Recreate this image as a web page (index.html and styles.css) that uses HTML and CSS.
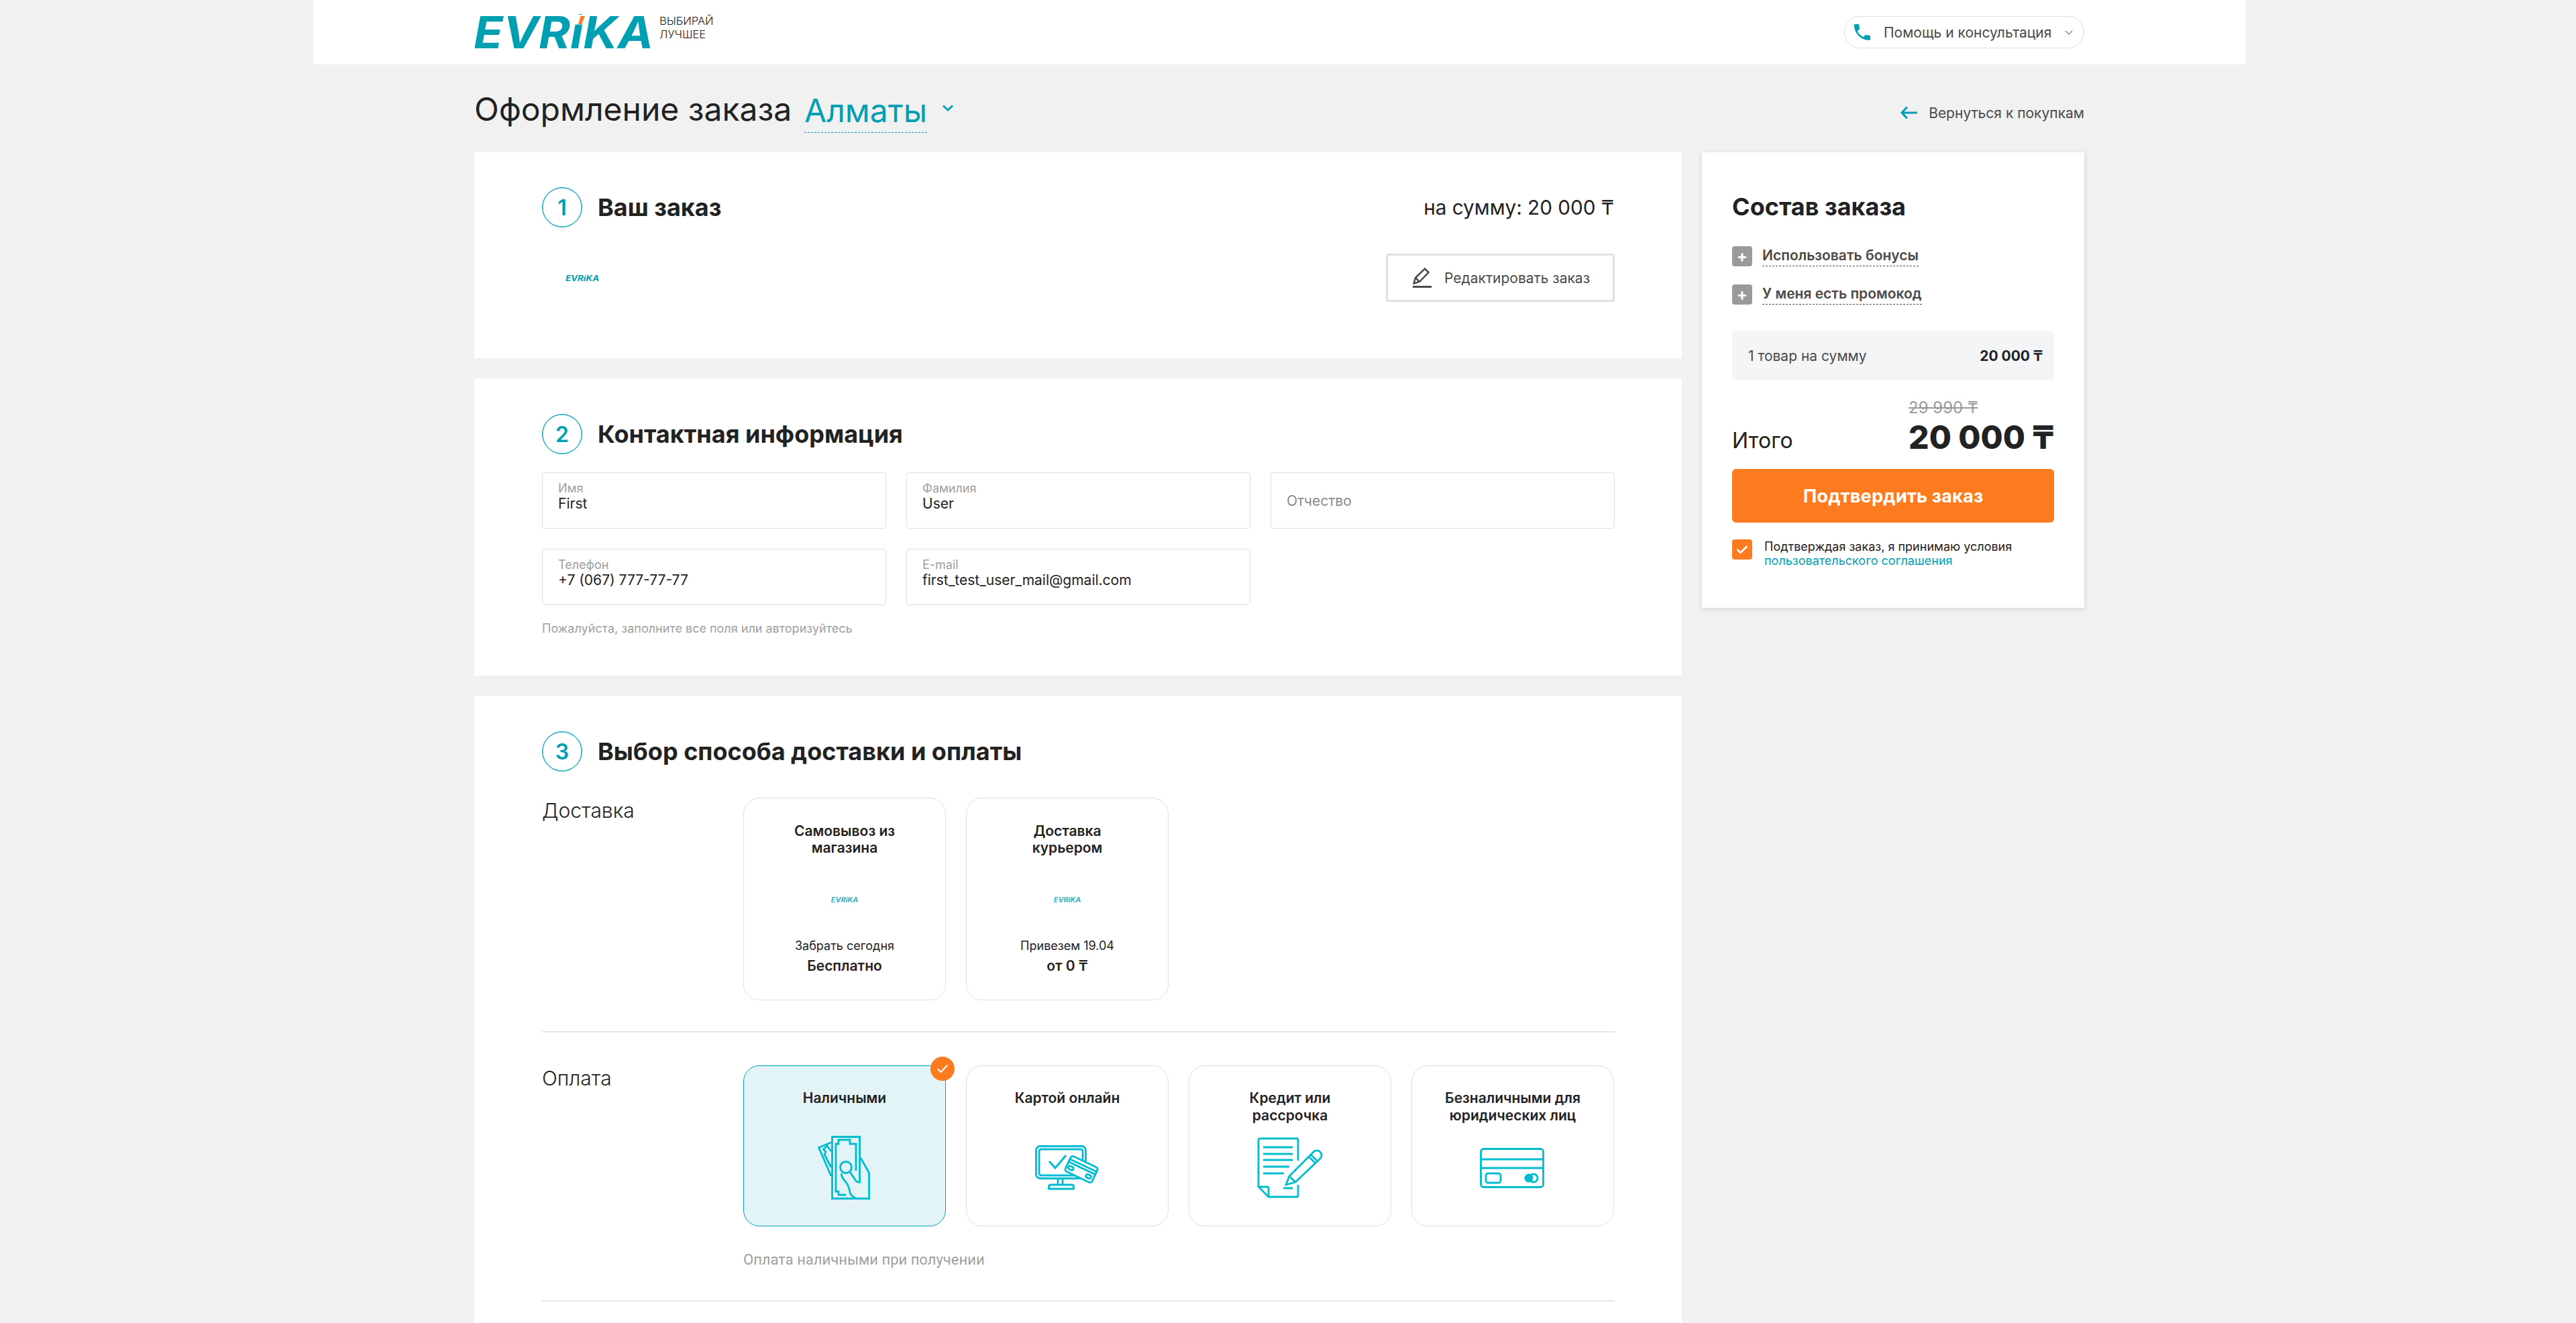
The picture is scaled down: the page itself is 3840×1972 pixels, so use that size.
FILE: index.html
```html
<!DOCTYPE html>
<html lang="ru">
<head>
<meta charset="utf-8">
<title>Оформление заказа</title>
<link rel="stylesheet" href="styles.css">
</head>
<body>
<header class="topbar">
  <div class="topbar-inner">
    <div class="brand">
      <svg class="logo" viewBox="0 0 266 48"><text class="logo-text" x="-1" y="48" textLength="268" lengthAdjust="spacingAndGlyphs">EVRiKA</text><rect x="150" y="-2" width="20" height="14.500" fill="#fff"/><polygon points="158.500,0 165,0 160,12 155,12" fill="#fc7b1e"/></svg>
      <div class="tagline">ВЫБИРАЙ<br>ЛУЧШЕЕ</div>
    </div>
    <div class="help">
      <svg class="help-phone" viewBox="0 0 24 24"><path d="M6.600 10.800c1.400 2.800 3.800 5.100 6.600 6.600l2.200-2.200c.3-.3.700-.4 1-.2 1.100.4 2.300.6 3.600.6.600 0 1 .4 1 1V20c0 .6-.4 1-1 1C10.600 21 3 13.400 3 4c0-.6.4-1 1-1h3.500c.6 0 1 .4 1 1 0 1.300.2 2.500.6 3.600.1.300 0 .7-.2 1z"/></svg>
      <span>Помощь и консультация</span>
      <svg class="help-chev" viewBox="0 0 12 7"><path d="M1 1l5 5 5-5"/></svg>
    </div>
  </div>
</header>

<div class="wrap">
  <div class="titlebar">
    <h1 class="page-title">Оформление заказа</h1>
    <span class="city">Алматы</span>
    <svg class="city-chev" viewBox="0 0 18 10"><path d="M2 1.500l7 6.500 7-6.500"/></svg>
    <a class="back">
      <svg class="back-arrow" viewBox="0 0 25 20"><path d="M10 1.500L2 10l8 8.500M2 10h23"/></svg>
      <span>Вернуться к покупкам</span>
    </a>
  </div>

  <div class="columns">
    <main class="main">
      <section class="panel panel-order">
        <div class="step-row">
          <div class="step"><span class="step-num">1</span><h2 class="step-title">Ваш заказ</h2></div>
          <div class="order-sum">на сумму: 20 000 ₸</div>
        </div>
        <div class="order-row">
          <svg class="logo-mini" viewBox="0 0 266 48"><text class="logo-text" x="-1" y="48" textLength="268" lengthAdjust="spacingAndGlyphs">EVRiKA</text><rect x="150" y="-2" width="20" height="14.500" fill="#fff"/><polygon points="158.500,0 165,0 160,12 155,12" fill="#fc7b1e"/></svg>
          <button class="edit-btn">
            <svg class="edit-icon" viewBox="0 0 28 30"><path class="edit-pen" d="M1.500 23.500L4 15 18 1.500 23.500 7 10 21zM4 15l6 6"/><rect x="0" y="27" width="28" height="3"/></svg>
            <span>Редактировать заказ</span>
          </button>
        </div>
      </section>

      <section class="panel panel-contact">
        <div class="step"><span class="step-num">2</span><h2 class="step-title">Контактная информация</h2></div>
        <div class="fields">
          <div class="field"><span class="field-label">Имя</span><span class="field-value">First</span></div>
          <div class="field"><span class="field-label">Фамилия</span><span class="field-value">User</span></div>
          <div class="field field-empty"><span class="field-placeholder">Отчество</span></div>
          <div class="field"><span class="field-label">Телефон</span><span class="field-value">+7 (067) 777-77-77</span></div>
          <div class="field"><span class="field-label">E-mail</span><span class="field-value">first_test_user_mail@gmail.com</span></div>
        </div>
        <p class="hint">Пожалуйста, заполните все поля или авторизуйтесь</p>
      </section>

      <section class="panel panel-method">
        <div class="step"><span class="step-num">3</span><h2 class="step-title">Выбор способа доставки и оплаты</h2></div>

        <div class="method-row method-delivery">
          <div class="method-name">Доставка</div>
          <div class="cards">
            <div class="card card-delivery">
              <div class="card-title">Самовывоз из<br>магазина</div>
              <svg class="logo-tiny" viewBox="0 0 266 48"><text class="logo-text" x="-1" y="48" textLength="268" lengthAdjust="spacingAndGlyphs">EVRiKA</text></svg>
              <div class="card-note">Забрать сегодня</div>
              <div class="card-price">Бесплатно</div>
            </div>
            <div class="card card-delivery">
              <div class="card-title">Доставка<br>курьером</div>
              <svg class="logo-tiny" viewBox="0 0 266 48"><text class="logo-text" x="-1" y="48" textLength="268" lengthAdjust="spacingAndGlyphs">EVRiKA</text></svg>
              <div class="card-note">Привезем 19.04</div>
              <div class="card-price">от 0 ₸</div>
            </div>
          </div>
        </div>

        <div class="method-row method-payment">
          <div class="method-name">Оплата</div>
          <div class="method-body">
            <div class="cards">
              <div class="card card-pay card-selected">
                <span class="badge"><svg viewBox="0 0 18 14"><path d="M1.500 7l5 5 10-10.500"/></svg></span>
                <div class="card-title">Наличными</div>
                <svg class="icon icon-cash" viewBox="0 0 78 95">
                  <path d="M20 10L1.500 17.500 20 60"/>
                  <path d="M20 23L14 15 8.500 20 12 24 10 28 20 47"/>
                  <path d="M64 33L76.500 55v38.500h-55v-92h41v67"/>
                  <path d="M42 88H31v-5h-4V12h4V6h17v6h9v40"/>
                  <circle cx="42" cy="47" r="8.500"/>
                  <path d="M48 54l9 13c2 2 4 3 7 2M36 56c-2 5 3 9 6 13 4 5 5 10 6 15 1 5 5 8 11 9.500"/>
                </svg>
              </div>
              <div class="card card-pay">
                <div class="card-title">Картой онлайн</div>
                <svg class="icon icon-monitor" viewBox="0 0 95 66">
                  <rect x="1.500" y="1.500" width="74" height="48" rx="6"/>
                  <rect x="6" y="6" width="65" height="39" rx="3"/>
                  <path d="M21 24l9 10 16-19"/>
                  <path d="M34 50v9M41 50v9M20.500 65v-3c0-2 1-3 3-3h31c2 0 3 1 3 3v3z"/>
                  <g transform="rotate(25.400 69 36)">
                    <rect class="icon-fill" x="47" y="23.500" width="44" height="25" rx="3.500"/>
                    <path d="M47 29.500h44M47 34h44"/>
                    <rect x="50" y="38.500" width="8" height="5" rx="2.500"/>
                    <rect x="79" y="38.500" width="8" height="5" rx="2.500"/>
                  </g>
                </svg>
              </div>
              <div class="card card-pay">
                <div class="card-title">Кредит или<br>рассрочка</div>
                <svg class="icon icon-doc" viewBox="0 0 96 89">
                  <path d="M60 34V3a2 2 0 0 0-2-2H3a2 2 0 0 0-2 2v70l15 15h42a2 2 0 0 0 2-2V70"/>
                  <path d="M1 73h13a2 2 0 0 1 2 2v13"/>
                  <path d="M8 14h44M8 24h44M8 33h44M8 43h39M8 53h31M38 75h14"/>
                  <path d="M42 70l5-13 36-36a7 7 0 0 1 10 10L56 66z"/>
                  <path d="M47 57l9 9M79 25l9 9M76 28l9 9"/>
                </svg>
              </div>
              <div class="card card-pay">
                <div class="card-title">Безналичными для<br>юридических лиц</div>
                <svg class="icon icon-card" viewBox="0 0 96 60">
                  <rect x="1.500" y="1.500" width="93" height="57" rx="4"/>
                  <path d="M1.500 17h93M1.500 30h93"/>
                  <rect x="9" y="38" width="22" height="14" rx="3"/>
                  <circle class="icon-solid" cx="73" cy="45" r="6.500"/>
                  <circle cx="80" cy="45" r="6"/>
                </svg>
              </div>
            </div>
            <p class="pay-note">Оплата наличными при получении</p>
          </div>
        </div>
      </section>
    </main>

    <aside class="summary">
      <h2 class="summary-title">Состав заказа</h2>
      <div class="summary-opts">
        <div class="opt"><span class="opt-plus">+</span><span class="opt-text">Использовать бонусы</span></div>
        <div class="opt"><span class="opt-plus">+</span><span class="opt-text">У меня есть промокод</span></div>
      </div>
      <div class="subtotal"><span class="subtotal-label">1 товар на сумму</span><span class="subtotal-val">20 000 ₸</span></div>
      <div class="total">
        <span class="total-label">Итого</span>
        <div class="total-prices">
          <span class="old-price">29 990 ₸</span>
          <span class="new-price">20 000 ₸</span>
        </div>
      </div>
      <button class="confirm">Подтвердить заказ</button>
      <div class="agree">
        <span class="agree-box"><svg viewBox="0 0 18 14"><path d="M1.500 7l5 5 10-10"/></svg></span>
        <p class="agree-text">Подтверждая заказ, я принимаю условия<br><a class="agree-link">пользовательского соглашения</a></p>
      </div>
    </aside>
  </div>
</div>
</body>
</html>
```
FILE: styles.css
```css
* { box-sizing: border-box; }
html, body { height: 100%; overflow: hidden; }
body {
  margin: 0;
  padding-right: 26px;
  background: #f1f1f1;
  color: #222;
  font-family: Inter, "Liberation Sans", sans-serif;
}
h1, h2, p { margin: 0; font-weight: inherit; }
button { font-family: inherit; cursor: pointer; }

.topbar { width: 2880px; height: 96px; margin: 0 auto; background: #fff; }
.topbar-inner {
  width: 2400px; height: 100%; margin: 0 auto;
  display: flex; align-items: center; justify-content: space-between;
}
.brand { display: flex; gap: 10px; align-items: flex-start; }
.logo { width: 266px; height: 48px; display: block; overflow: visible; }
.logo-text { font-family: Inter, sans-serif; font-weight: 700; font-style: italic; font-size: 66px; fill: #009fb2; }
.tagline { margin-top: -3px; font-size: 16.500px; line-height: 20px; color: #222; font-weight: 300; }

.help {
  width: 358px; height: 48px; border: 1px solid #e0e0e0; border-radius: 24px;
  display: flex; align-items: center; padding: 0 15px;
  font-size: 21px; color: #4a4a4a; white-space: nowrap;
}
.help-phone { width: 32px; height: 32px; fill: #009fb2; margin: 0 16px 0 -5px; flex: none; }
.help-chev { width: 12px; height: 7px; margin-left: 20px; fill: none; stroke: #8a8a8a; stroke-width: 1.500; flex: none; }

.wrap { width: 2400px; margin: 0 auto; }
.titlebar { height: 131px; display: flex; align-items: center; padding-top: 2px; }
.page-title { font-size: 48px; font-weight: 400; color: #222; }
.city { margin: 4px 0 0 19px; font-size: 48px; color: #009fb2; border-bottom: 1px dashed #009fb2; line-height: 65px; }
.city-chev { width: 18px; height: 10px; margin: -3px 0 0 22px; fill: none; stroke: #009fb2; stroke-width: 3; }
.back { margin: 11px 0 0 auto; display: flex; align-items: center; gap: 17px; font-size: 21px; color: #4a4a4a; }
.back-arrow { width: 25px; height: 20px; fill: none; stroke: #009fb2; stroke-width: 3; }

.columns { display: flex; gap: 30px; align-items: flex-start; }
.main { width: 1800px; display: flex; flex-direction: column; gap: 30px; }
.panel { background: #fff; padding: 52px 100px 0 101px; }
.step-row { display: flex; justify-content: space-between; align-items: center; }
.step { display: flex; align-items: center; gap: 23px; }
.step-num {
  width: 60px; height: 60px; border: 1px solid #009fb2; border-radius: 50%;
  box-shadow: inset 0 0 0 .5px #009fb2;
  display: flex; align-items: center; justify-content: center;
  font-size: 32px; font-weight: 600; color: #009fb2;
}
.step-title { font-size: 36px; font-weight: 700; color: #222; }
.order-sum { font-size: 29.700px; color: #222; padding-right: 1px; }

.panel-order { height: 307px; }
.order-row { display: flex; justify-content: space-between; align-items: center; margin-top: 39px; }
.logo-mini { width: 50px; height: 9px; margin-left: 35px; display: block; overflow: visible; }
.edit-btn {
  width: 341px; height: 72px; background: #fff; border: 3px solid #e0e0e0; border-radius: 4px;
  display: flex; align-items: center; gap: 19px; padding: 0 0 0 37px;
  font-size: 21px; color: #4a4a4a; white-space: nowrap;
}
.edit-icon { width: 28px; height: 30px; fill: #4a4a4a; flex: none; }
.edit-pen { fill: none; stroke: #4a4a4a; stroke-width: 2.500; }

.panel-contact { height: 443px; padding-top: 53px; }
.fields { display: grid; grid-template-columns: repeat(3, 513px); column-gap: 30px; row-gap: 30px; margin-top: 27px; }
.field {
  height: 84px; border: 1px solid #dfdfe6; border-radius: 4px; padding: 13px 23px 0;
  display: flex; flex-direction: column;
}
.field-label { font-size: 18px; line-height: 20px; color: #a0a0a0; }
.field-value { margin-top: 1px; font-size: 21px; line-height: 24px; color: #222; }
.field-empty { justify-content: center; padding-top: 0; }
.field-placeholder { font-size: 21px; color: #8a8a8a; }
.hint { margin-top: 24px; font-size: 18px; line-height: 22px; color: #a0a0a0; }

.panel-method { height: 1100px; padding-top: 53px; }
.method-row { display: flex; }
.method-delivery { margin-top: 39px; padding-bottom: 46px; border-bottom: 2px solid #e4e4ea; }
.method-payment { margin-top: 49px; padding-bottom: 46px; border-bottom: 2px solid #e4e4ea; }
.method-name { width: 300px; font-size: 30px; font-weight: 300; line-height: 38px; color: #222; }
.cards { display: flex; gap: 30px; }
.card {
  width: 302px; border: 1px solid #dfdfe6; border-radius: 24px; background: #fff;
  position: relative; display: flex; flex-direction: column; align-items: center;
  text-align: center; flex: none;
}
.card-title { font-size: 21px; font-weight: 600; line-height: 25px; color: #222; }
.card-delivery { height: 302px; padding-top: 36px; }
.logo-tiny { width: 40px; height: 8px; margin-top: 61px; display: block; overflow: visible; opacity: .8; }
.card-note { margin-top: 53px; font-size: 18px; line-height: 24px; color: #222; }
.card-price { margin-top: 5px; font-size: 21px; font-weight: 600; line-height: 26px; color: #222; }
.card-pay { height: 240px; padding-top: 35px; }
.card-pay .card-title { line-height: 26px; }
.card-selected { background: #e3f4f7; border-color: #00a3b8; }
.badge {
  position: absolute; right: -14px; top: -14px; width: 36px; height: 36px; border-radius: 50%;
  background: #fc7b1e; display: flex; align-items: center; justify-content: center;
}
.badge svg { width: 18px; height: 14px; fill: none; stroke: #fff; stroke-width: 2; }
.icon { position: absolute; fill: none; stroke: #00bcd0; stroke-width: 2.800; overflow: visible; }
.icon-fill { fill: #fff; }
.icon-solid { fill: #00bcd0; stroke: none; }
.icon-cash { width: 78px; height: 95px; left: 110px; top: 104px; }
.icon-monitor { width: 95px; height: 66px; left: 102px; top: 118px; }
.icon-doc { width: 96px; height: 89px; left: 102px; top: 107px; }
.icon-card { width: 96px; height: 60px; left: 101px; top: 122px; }
.pay-note { margin-top: 36px; font-size: 22px; line-height: 28px; color: #a0a0a0; font-family: Roboto, sans-serif; }

.summary {
  width: 570px; height: 679px; background: #fff; padding: 58px 45px 0;
  box-shadow: 0 2px 8px rgba(0,0,0,.12);
}
.summary-title { font-size: 36px; font-weight: 700; line-height: 46px; color: #222; }
.summary-opts { margin-top: 36px; display: flex; flex-direction: column; gap: 27px; }
.opt { display: flex; align-items: flex-start; gap: 15px; height: 30px; }
.opt-plus {
  width: 30px; height: 30px; background: #9a9a9a; color: #fff; border-radius: 4px;
  display: flex; align-items: center; justify-content: center; font-size: 24px; font-weight: 700; line-height: 1;
}
.opt-text { font-size: 21px; font-weight: 600; line-height: 28px; padding-bottom: 1px; color: #4a4a4a; border-bottom: 1px dashed #4a4a4a; }
.subtotal {
  margin-top: 39px; height: 74px; background: #f4f5f7; border-radius: 6px;
  display: flex; justify-content: space-between; align-items: center; padding: 0 17px 0 24px;
}
.subtotal-label { font-size: 21px; color: #4a4a4a; }
.subtotal-val { font-size: 21px; font-weight: 700; color: #222; }
.total { margin-top: 26px; display: flex; justify-content: space-between; align-items: flex-end; }
.total-label { font-size: 32px; line-height: 40px; color: #222; padding-bottom: 4px; }
.total-prices { display: flex; flex-direction: column; align-items: flex-start; }
.old-price { font-size: 24px; line-height: 30px; color: #9a9a9a; text-decoration: line-through; }
.new-price { font-size: 48px; line-height: 58px; font-weight: 800; color: #222; }
.confirm {
  display: block; width: 100%; height: 80px; margin-top: 18px; border: 0; border-radius: 6px;
  background: #fc7b1e; color: #fff; font-size: 27.500px; font-weight: 700;
}
.agree { margin-top: 25px; display: flex; gap: 18px; }
.agree-box {
  width: 30px; height: 30px; border-radius: 4px; background: #fc7b1e; flex: none;
  display: flex; align-items: center; justify-content: center;
}
.agree-box svg { width: 18px; height: 14px; fill: none; stroke: #fff; stroke-width: 2.500; }
.agree-text { font-size: 18px; line-height: 21px; color: #222; }
.agree-link { color: #009fb2; }
```
